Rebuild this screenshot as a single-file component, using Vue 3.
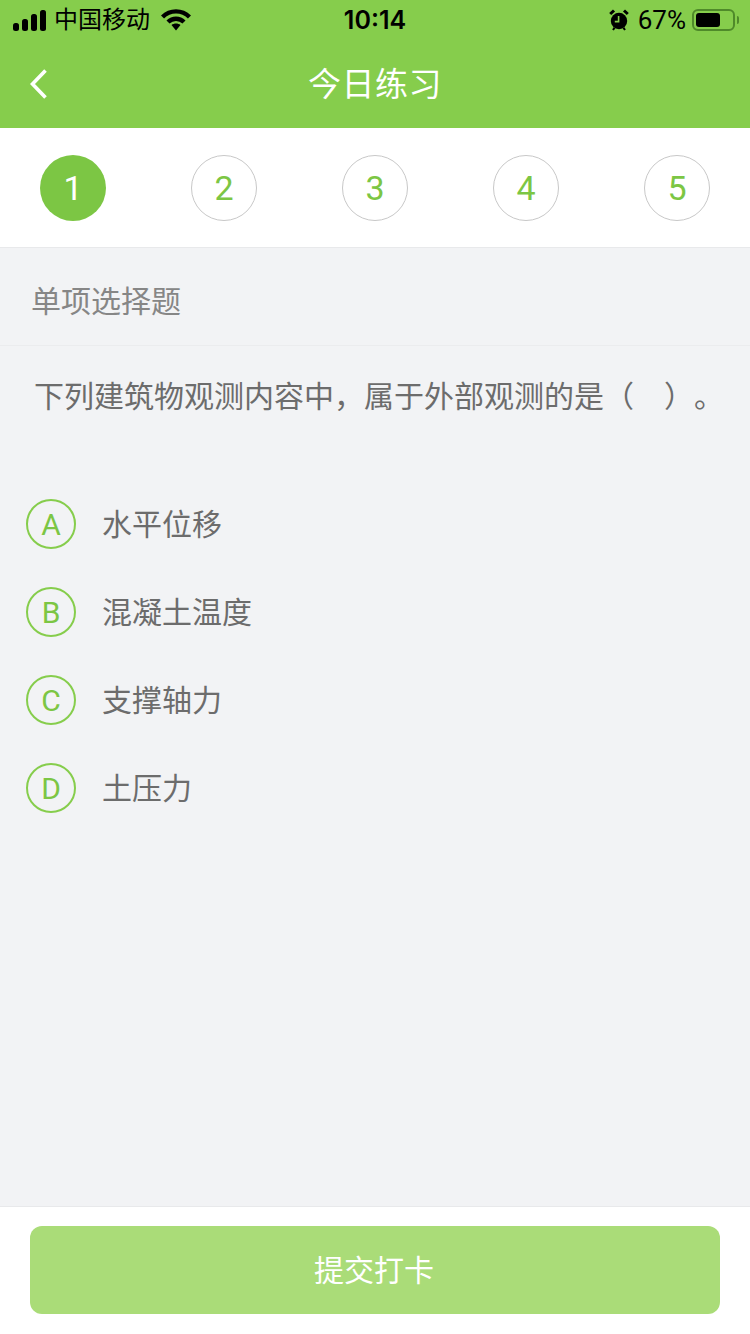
<template>
  <div class="page">
    <div class="header">
      <div class="status-bar">
        <div class="status-left">
          <svg class="signal" width="33" height="21" viewBox="0 0 33 21">
            <rect x="0" y="13" width="6" height="8" rx="2.5" />
            <rect x="9" y="9" width="6" height="12" rx="2.5" />
            <rect x="18" y="4" width="6" height="17" rx="2.5" />
            <rect x="27" y="0" width="6" height="21" rx="2.5" />
          </svg>
          <span class="carrier">中国移动</span>
          <svg class="wifi" width="30" height="22" viewBox="0 0 30 22">
            <path d="M1.5 8 C9 0.5 21 0.5 28.5 8" />
            <path d="M7 13 C11.5 8.6 18.5 8.6 23 13" />
            <path class="wifi-dot" d="M10.5 16 C13 14 17 14 19.5 16 L15 21.5 Z" />
          </svg>
        </div>
        <div class="time">10:14</div>
        <div class="status-right">
          <svg class="alarm" width="20" height="22" viewBox="0 0 20 22">
            <circle cx="10" cy="12" r="8.2" fill="#000" />
            <path d="M1.2 5 L5 1.5 M18.8 5 L15 1.5" stroke="#000" stroke-width="3" fill="none" />
            <path d="M4 21 L5.6 18.6 M16 21 L14.4 18.6" stroke="#000" stroke-width="2" fill="none" />
            <path d="M9.6 7 V12.6 H5.8" stroke="#86cd4c" stroke-width="1.6" fill="none" />
          </svg>
          <span class="percent">67%</span>
          <div class="battery">
            <div class="battery-level"></div>
          </div>
          <div class="battery-cap"></div>
        </div>
      </div>
      <div class="nav">
        <svg class="back" width="18" height="30" viewBox="0 0 18 30">
          <path d="M15.5 1.5 L2.5 15 L15.5 28.5" />
        </svg>
        <span class="nav-title">今日练习</span>
      </div>
    </div>

    <div class="steps">
      <div v-for="n in steps" :key="n" class="step" :class="{ active: n === current }">{{ n }}</div>
    </div>

    <div class="content">
      <div class="type"><span>单项选择题</span></div>
      <div class="question">下列建筑物观测内容中，属于外部观测的是（　）。</div>
      <div class="options">
        <div v-for="o in options" :key="o.key" class="option">
          <div class="option-key">{{ o.key }}</div>
          <div class="option-text">{{ o.text }}</div>
        </div>
      </div>
    </div>

    <div class="footer">
      <button class="submit">提交打卡</button>
    </div>
  </div>
</template>

<script setup>
const steps = [1, 2, 3, 4, 5];
const current = 1;
const options = [
  { key: "A", text: "水平位移" },
  { key: "B", text: "混凝土温度" },
  { key: "C", text: "支撑轴力" },
  { key: "D", text: "土压力" }
];
</script>

<style>
body {
  background: #f2f3f5;
}
</style>

<style scoped>
.page {
  width: 750px;
  height: 1334px;
  display: flex;
  flex-direction: column;
  background-color: #f2f3f5;
  font-family: "Liberation Sans", "Noto Sans CJK SC", sans-serif;
  overflow: hidden;
}

.header {
  height: 128px;
  background-color: #86cd4c;
}

.status-bar {
  height: 40px;
  display: flex;
  align-items: center;
  justify-content: space-between;
  position: relative;
  padding: 0 11px 0 13px;
  color: #000;
}

.status-left {
  display: flex;
  align-items: center;
}

.signal {
  fill: #000;
}

.carrier {
  font-size: 24px;
  margin-left: 8px;
  line-height: 40px;
}

.wifi {
  margin-left: 11px;
  fill: none;
  stroke: #000;
  stroke-width: 4.4;
}

.wifi-dot {
  fill: #000;
  stroke: none;
}

.time {
  position: absolute;
  left: 0;
  right: 0;
  text-align: center;
  font-size: 25px;
  font-family: "Inter", "Liberation Sans", sans-serif;
  font-weight: 600;
}

.status-right {
  display: flex;
  align-items: center;
}

.alarm {
  margin-right: -1px;
}

.percent {
  font-size: 26px;
  font-family: "Roboto", sans-serif;
  margin-left: 10px;
}

.battery {
  width: 43px;
  height: 22px;
  box-sizing: border-box;
  margin-left: 6px;
  padding: 2px;
  border: 2px solid #4f8a2a;
  border-radius: 6px;
}

.battery-level {
  width: 24px;
  height: 100%;
  background-color: #000;
  border-radius: 3px;
}

.battery-cap {
  width: 2px;
  height: 8px;
  margin-left: 2px;
  background-color: #4f8a2a;
  border-radius: 0 2px 2px 0;
}

.nav {
  height: 88px;
  display: flex;
  align-items: center;
  justify-content: center;
  position: relative;
}

.back {
  position: absolute;
  left: 30px;
  top: 29px;
  fill: none;
  stroke: #fff;
  stroke-width: 3.6;
}

.nav-title {
  font-size: 33px;
  letter-spacing: 0.5px;
  color: #fff;
  margin-bottom: 4px;
}

.steps {
  height: 120px;
  box-sizing: border-box;
  padding: 27px 40px 0;
  display: flex;
  justify-content: space-between;
  background-color: #fff;
  border-bottom: 1px solid #e8e9eb;
}

.step {
  width: 66px;
  height: 66px;
  box-sizing: border-box;
  display: flex;
  align-items: center;
  justify-content: center;
  border: 1px solid #c8c8c8;
  border-radius: 50%;
  font-family: "Roboto", sans-serif;
  font-size: 34px;
  color: #7cc644;
}

.step.active {
  border: none;
  background-color: #7cc644;
  color: #fff;
}

.content {
  flex: 1;
}

.type {
  height: 98px;
  box-sizing: border-box;
  padding: 4px 0 0 31px;
  display: flex;
  align-items: center;
  border-bottom: 1px solid #ebecee;
  font-size: 30px;
  color: #868686;
}

.question {
  padding: 31px 0 0 34px;
  font-size: 30px;
  line-height: 40px;
  color: #6c6c6c;
  white-space: nowrap;
  text-spacing-trim: space-all;
}

.options {
  margin-top: 82px;
  padding-left: 26px;
  display: flex;
  flex-direction: column;
  gap: 38px;
}

.option {
  display: flex;
  align-items: center;
}

.option-key {
  width: 50px;
  height: 50px;
  box-sizing: border-box;
  display: flex;
  align-items: center;
  justify-content: center;
  border: 2px solid #86cd4c;
  border-radius: 50%;
  font-family: "Roboto", sans-serif;
  font-size: 30px;
  color: #7cc644;
}

.option-text {
  margin: 0 0 5px 26px;
  font-size: 30px;
  color: #6c6c6c;
}

.footer {
  height: 128px;
  box-sizing: border-box;
  padding: 19px 30px 0;
  background-color: #fff;
  border-top: 1px solid #e8e9eb;
}

.submit {
  display: block;
  width: 100%;
  height: 88px;
  padding: 0 2px 4px 0;
  border: none;
  border-radius: 12px;
  background-color: #aadc78;
  color: #fff;
  font-family: inherit;
  font-size: 30px;
}
</style>
